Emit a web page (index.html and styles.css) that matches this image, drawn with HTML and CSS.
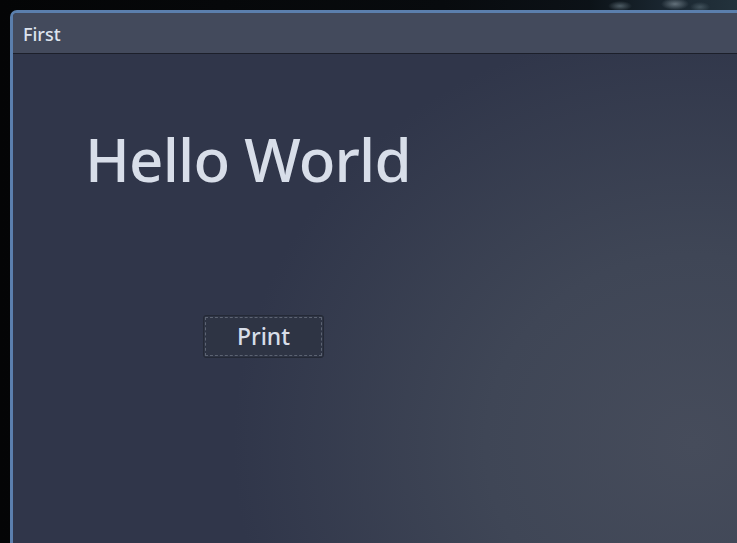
FILE: index.html
```html
<!DOCTYPE html>
<html>
<head>
<meta charset="utf-8">
<link rel="stylesheet" href="styles.css">
</head>
<body>
<div class="desktop">
  <div class="texture"></div>
  <div class="window">
    <div class="titlebar"><span class="title">First</span></div>
    <div class="content">
      <h1 class="hello">Hello World</h1>
      <div class="btn-row">
        <button class="btn"><span class="focus">Print</span></button>
      </div>
    </div>
  </div>
</div>
</body>
</html>
```
FILE: styles.css
```css
html, body {
  margin: 0;
  padding: 0;
  width: 737px;
  height: 543px;
  overflow: hidden;
  background: #050607;
  font-family: "Noto Sans", "Open Sans", sans-serif;
}
.desktop {
  position: relative;
  width: 737px;
  height: 543px;
  padding: 10px 0 0 10px;
  box-sizing: border-box;
  background: linear-gradient(90deg, #040506 0%, #080b0e 60%, #101820 100%);
}
.texture {
  position: absolute;
  left: 590px;
  top: 0;
  width: 147px;
  height: 10px;
  background:
    radial-gradient(ellipse 12px 5px at 30px 6px, rgba(150,170,180,0.45), transparent),
    radial-gradient(ellipse 14px 6px at 85px 4px, rgba(170,185,195,0.5), transparent),
    radial-gradient(ellipse 10px 5px at 110px 7px, rgba(120,140,150,0.4), transparent),
    linear-gradient(90deg, #0c1318, #1a2630 50%, #23323c);
}
.window {
  position: relative;
  width: 740px;
  height: 540px;
  border: 3px solid #5b7fad;
  border-right: none;
  border-bottom: none;
  border-top-left-radius: 7px;
  overflow: hidden;
  display: flex;
  flex-direction: column;
  background: #30364a;
}
.titlebar {
  height: 40px;
  flex: none;
  background: #434a5c;
  border-bottom: 1px solid #1c1f2a;
  display: flex;
  align-items: center;
  padding-left: 10px;
}
.title {
  color: #dde3ee;
  font-size: 18px;
  font-weight: 500;
  line-height: 1;
  margin-top: 1px;
}
.content {
  flex: 1;
  background:
    radial-gradient(ellipse 460px 420px at 680px 390px, #464c5b 0%, #3f4656 45%, rgba(48,54,70,0) 100%),
    #30364a;
  padding-left: 72px;
}
.hello {
  margin: 65px 0 0 0;
  font-weight: 500;
  font-size: 60px;
  line-height: 80px;
  color: #d8dee9;
  letter-spacing: -0.8px;
}
.btn-row {
  margin: 116px 0 0 118px;
}
.btn {
  width: 121px;
  height: 43px;
  padding: 1px;
  margin: 0;
  background: #2e3444;
  border: 1px solid #242936;
  border-radius: 3px;
  font-family: inherit;
  box-sizing: border-box;
  display: flex;
}
.focus {
  flex: 1;
  border: 1px dashed #5d6473;
  display: flex;
  align-items: center;
  justify-content: center;
  color: #d8dee9;
  font-size: 23px;
  font-weight: 500;
  line-height: 1;
  padding-bottom: 1px;
}
```
